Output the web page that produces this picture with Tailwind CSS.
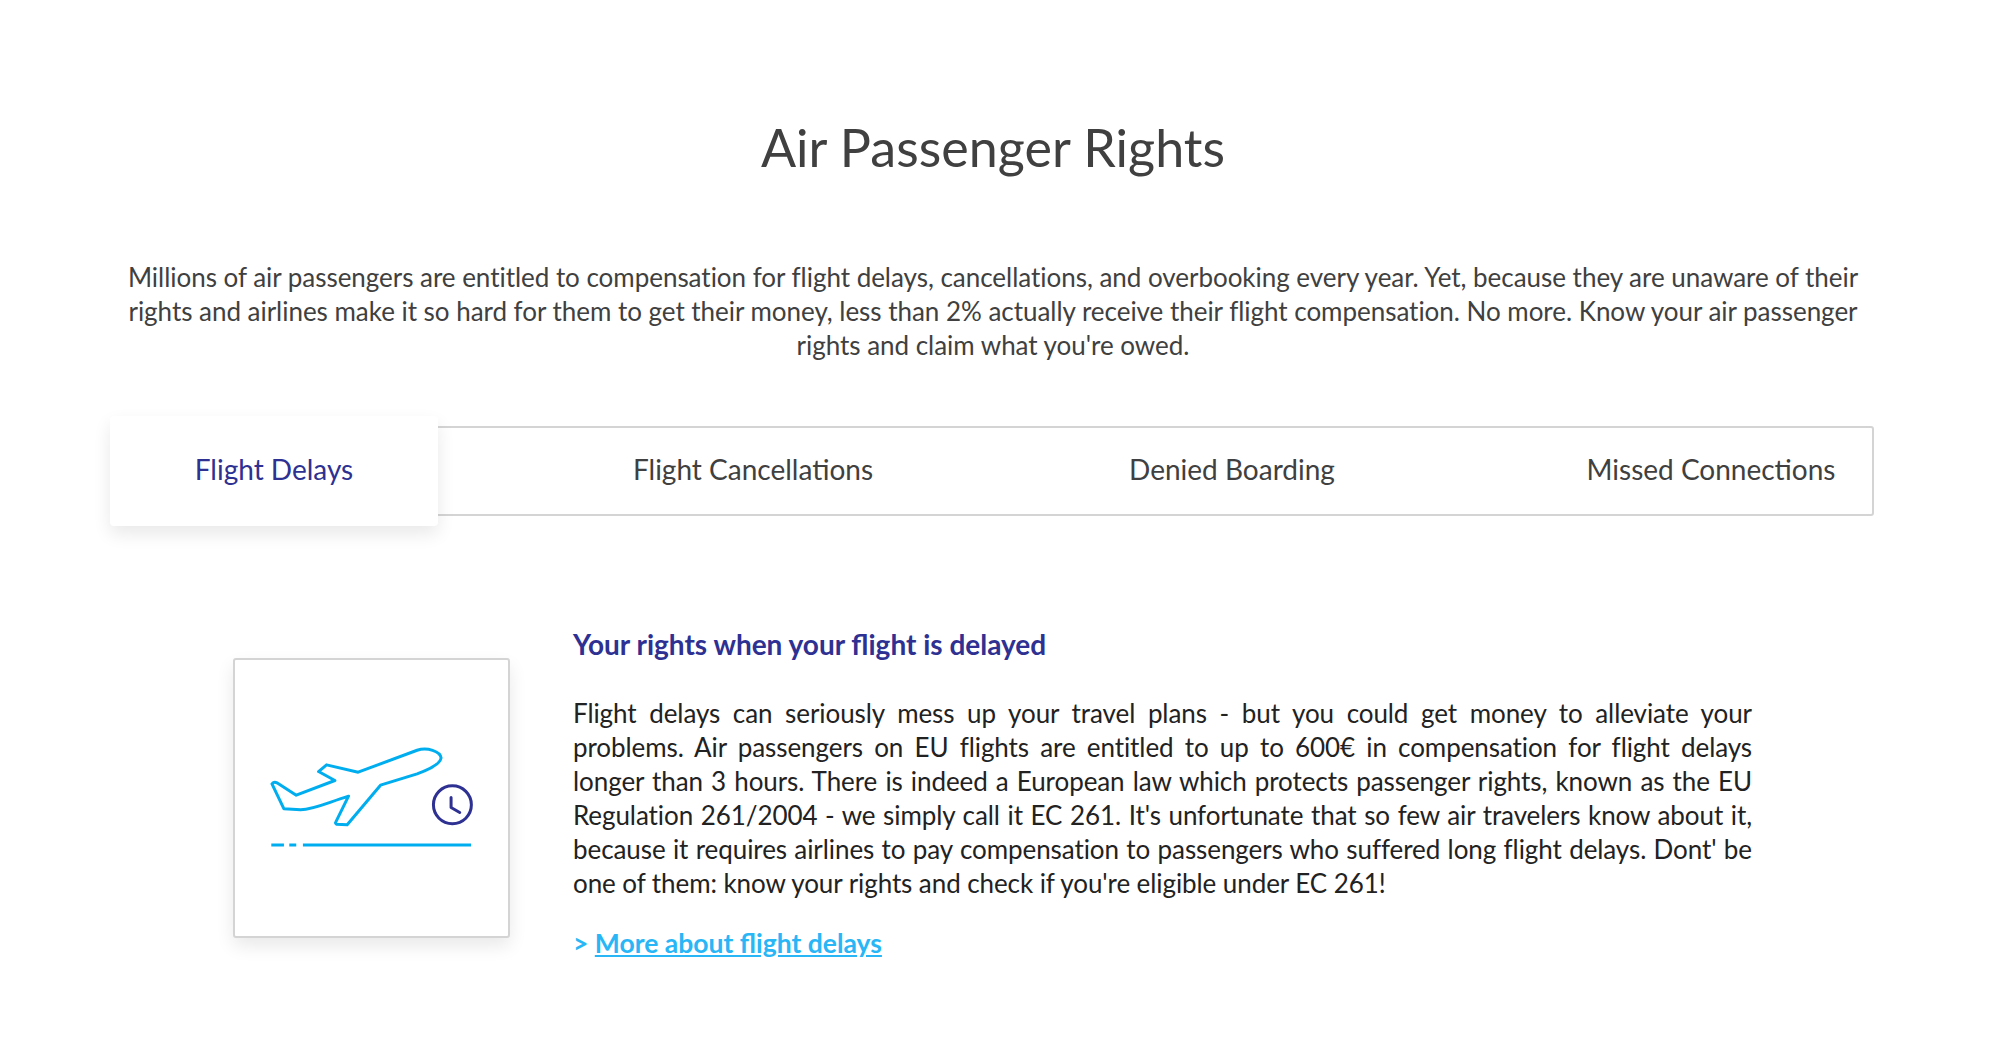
<!DOCTYPE html>
<html lang="en">
<head>
  <meta charset="UTF-8" />
  <title>Air Passenger Rights</title>
  <script src="https://cdn.jsdelivr.net/npm/@tailwindcss/browser@4"></script>
</head>
<body class="bg-white font-['Lato',sans-serif] text-[#404040]">
  <div class="w-[1998px] h-[1058px] overflow-hidden pt-[115px]">
    <div class="w-[1986px]">
      <h1 class="text-center text-[52px] leading-[64px] font-normal tracking-[0.05px]">Air Passenger Rights</h1>

      <p class="mt-[81px] mx-auto w-[1770px] text-center text-[26px] leading-[34px] tracking-[-0.03px]">Millions of air passengers are entitled to compensation for flight delays, cancellations, and overbooking every year. Yet, because they are unaware of their rights and airlines make it so hard for them to get their money, less than 2% actually receive their flight compensation. No more. Know your air passenger rights and claim what you're owed.</p>
    </div>

    <div class="mt-[64px] ml-[110px] w-[1764px] h-[90px] border-2 border-[#d4d4d4] rounded-[3px] flex items-center text-[28px]">
      <div class="shrink-0 w-[328px] h-[110px] -ml-[2px] pb-[4px] bg-white rounded-[4px] shadow-[0_8px_18px_rgba(0,0,0,0.09)] flex items-center justify-center text-[#2e3192]">Flight Delays</div>
      <div class="shrink-0 w-[328px] ml-[151px] pb-[4px] text-center">Flight Cancellations</div>
      <div class="shrink-0 w-[328px] ml-[151px] pb-[4px] text-center">Denied Boarding</div>
      <div class="shrink-0 w-[328px] ml-[151px] pb-[4px] text-center">Missed Connections</div>
    </div>

    <div class="mt-[111px] ml-[233px] flex w-[1519px]">
      <div class="shrink-0 mt-[31px] w-[277px] h-[280px] border-2 border-[#d4d4d4] rounded-[3px] bg-white shadow-[0_8px_18px_rgba(0,0,0,0.09)]">
        <svg class="w-[273px] h-[276px]" viewBox="103 61 820 829" fill="none" stroke-width="9" stroke-linecap="round" stroke-linejoin="round">
          <path stroke="#00aeef" d="M214 433C218 428 224 427 229 430L287 467L403 423L354 396L378 376L473 398L650 332C680 322 720 335 722 355C720 375 680 392 650 403L540 437L440 556L408 554Q403 551 406 547L444 470C380 490 340 510 300 511L250 508Z" />
          <path stroke="#00aeef" stroke-linecap="butt" d="M212 617H250M266 617H287M307 617H812" />
          <circle stroke="#2e3192" cx="756" cy="496" r="57" />
          <path stroke="#2e3192" d="M752 474V504L778 519" />
        </svg>
      </div>
      <div class="ml-[63px] flex-1 text-[26px] leading-[34px] text-[#222]">
        <h2 class="text-[#2e3192] text-[28px] font-bold leading-[34px]">Your rights when your flight is delayed</h2>
        <p class="mt-[35px] text-justify tracking-[-0.08px]">Flight delays can seriously mess up your travel plans - but you could get money to alleviate your problems. Air passengers on EU flights are entitled to up to 600€ in compensation for flight delays longer than 3 hours. There is indeed a European law which protects passenger rights, known as the EU Regulation 261/2004 - we simply call it EC 261. It's unfortunate that so few air travelers know about it, because it requires airlines to pay compensation to passengers who suffered long flight delays. Dont' be one of them: know your rights and check if you're eligible under EC 261!</p>
        <p class="mt-[26px] font-bold text-[26.5px] text-[#29b6f6]">&gt; <a href="#" class="underline">More about flight delays</a></p>
      </div>
    </div>
  </div>
</body>
</html>
